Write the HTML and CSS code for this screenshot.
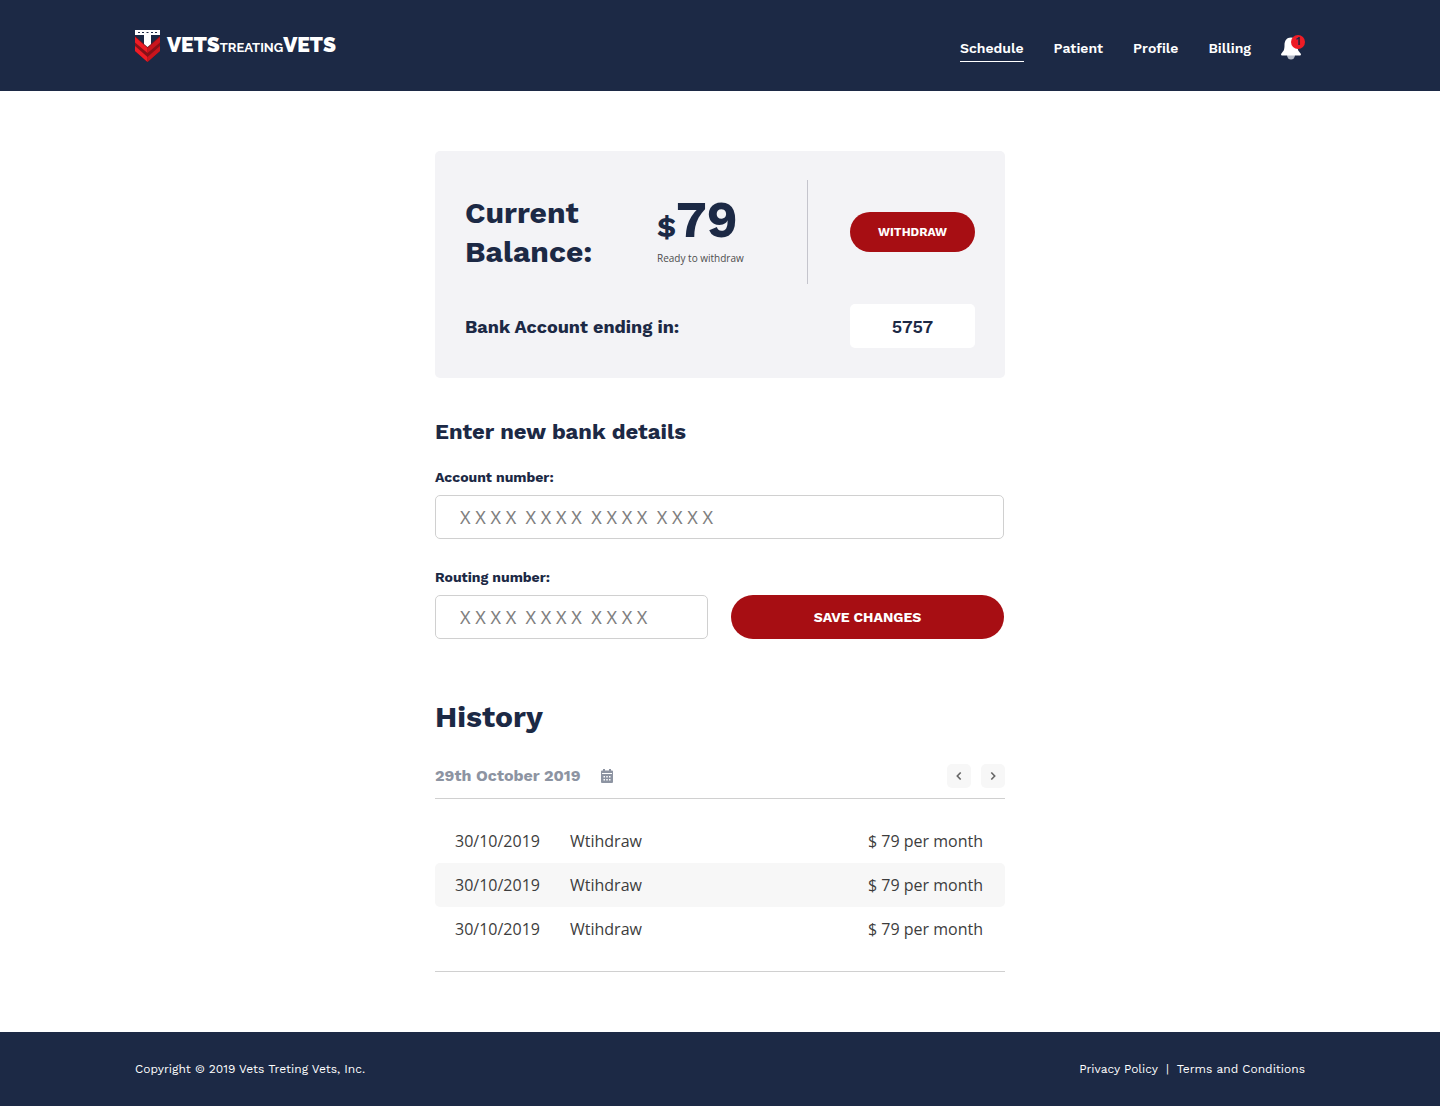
FILE: index.html
```html
<!DOCTYPE html>
<html lang="en">
<head>
<meta charset="utf-8">
<meta name="viewport" content="width=device-width, initial-scale=1">
<title>Billing - Vets Treating Vets</title>
<link rel="stylesheet" href="styles.css">
</head>
<body>
<header class="site-header">
  <div class="container header-row">
    <a class="brand" href="#" aria-label="Vets Treating Vets">
      <svg class="brand-mark" width="25" height="32" viewBox="0 0 25 32" aria-hidden="true">
        <path d="M0 6l12.500 11L25 6v15L12.500 32 0 21z" fill="#861118"/>
        <path d="M0 7l12.500 11V23L0 12.500zM0 16l12.500 11v5L0 21z" fill="#ee1c25"/>
        <path d="M25 7L12.500 18V23L25 12.500zM25 16L12.500 27v5L25 21z" fill="#c9151d"/>
        <path d="M0 0h25v5h-9v9l-3.500 3L9 14V5H0z" fill="#fff"/>
        <path d="M3 2h2v1H3zM7 2h2v1H7zM11.500 2h2v1h-2zM16 2h2v1h-2zM20 2h2v1h-2z" fill="#1c2945"/>
      </svg>
      <span class="brand-name">VETS<span class="brand-small">TREATING</span>VETS</span>
    </a>
    <nav class="nav" aria-label="Main">
      <a class="nav-link active" href="#">Schedule</a>
      <a class="nav-link" href="#">Patient</a>
      <a class="nav-link" href="#">Profile</a>
      <a class="nav-link" href="#">Billing</a>
      <button class="bell" type="button" aria-label="Notifications">
        <svg width="20" height="23" viewBox="0 0 20 23" aria-hidden="true">
          <path d="M6 18h8a4 4.500 0 0 1-8 0z" fill="#b4bac6"/>
          <path d="M10 0.500C5.500 0.500 3.500 4 3.500 8c0 5-1 6-2.700 8-1.300 1.500-.8 2.500.7 2.500h17c1.500 0 2-1 .7-2.500-1.700-2-2.700-3-2.700-8 0-4-2-7.500-6.500-7.500z" fill="#fff"/>
        </svg>
        <span class="badge">1</span>
      </button>
    </nav>
  </div>
</header>

<main class="content">
  <section class="balance">
    <div class="balance-top">
      <h1 class="title">Current Balance:</h1>
      <div class="amount-block">
        <p class="amount"><span class="currency">$</span>79</p>
        <p class="amount-note">Ready to withdraw</p>
      </div>
      <div class="withdraw">
        <button class="button button-small" type="button">WITHDRAW</button>
      </div>
    </div>
    <div class="balance-bottom">
      <label class="ending-label" for="ending">Bank Account ending in:</label>
      <input class="ending" id="ending" type="text" value="5757" readonly>
    </div>
  </section>

  <form class="details">
    <h2 class="subtitle">Enter new bank details</h2>
    <div class="field">
      <label class="label" for="account">Account number:</label>
      <input class="input" id="account" type="text" placeholder="X X X X&nbsp; X X X X&nbsp; X X X X&nbsp; X X X X">
    </div>
    <div class="field-row">
      <div class="field">
        <label class="label" for="routing">Routing number:</label>
        <input class="input" id="routing" type="text" placeholder="X X X X&nbsp; X X X X&nbsp; X X X X">
      </div>
      <button class="button" type="submit">SAVE CHANGES</button>
    </div>
  </form>

  <section class="history">
    <h2 class="title">History</h2>
    <div class="toolbar">
      <span class="date">29th October 2019</span>
      <button class="calendar" type="button" aria-label="Choose date">
        <svg width="12" height="14" viewBox="0 0 12 14" aria-hidden="true">
          <path d="M2 0h2v1.500h4V0h2v1.500h1a1 1 0 0 1 1 1V13a1 1 0 0 1-1 1H1a1 1 0 0 1-1-1V2.500a1 1 0 0 1 1-1h1z" fill="#8d94a2"/>
          <path d="M1 4h10v1H1zM2.500 7h1.500v1.500H2.500zM5.250 7h1.500v1.500h-1.500zM8 7h1.500v1.500H8zM2.500 10h1.500v1.500H2.500zM5.250 10h1.500v1.500h-1.500zM8 10h1.500v1.500H8z" fill="#fff"/>
        </svg>
      </button>
      <div class="pager">
        <button class="page-button" type="button" aria-label="Previous">
          <svg width="6" height="8" viewBox="0 0 6 8" aria-hidden="true"><path d="M4.700 .5L1.300 4l3.400 3.500" fill="none" stroke="#666" stroke-width="1.600"/></svg>
        </button>
        <button class="page-button" type="button" aria-label="Next">
          <svg width="6" height="8" viewBox="0 0 6 8" aria-hidden="true"><path d="M1.300 .5L4.700 4 1.300 7.500" fill="none" stroke="#666" stroke-width="1.600"/></svg>
        </button>
      </div>
    </div>
    <div class="table-wrap">
      <table class="table">
        <tbody>
          <tr><td class="col-date">30/10/2019</td><td>Wtihdraw</td><td class="col-sum">$ 79 per month</td></tr>
          <tr><td class="col-date">30/10/2019</td><td>Wtihdraw</td><td class="col-sum">$ 79 per month</td></tr>
          <tr><td class="col-date">30/10/2019</td><td>Wtihdraw</td><td class="col-sum">$ 79 per month</td></tr>
        </tbody>
      </table>
    </div>
  </section>
</main>

<footer class="site-footer">
  <div class="container footer-row">
    <span>Copyright © 2019 Vets Treting Vets, Inc.</span>
    <div class="legal">
      <a href="#">Privacy Policy</a>
      <span>|</span>
      <a href="#">Terms and Conditions</a>
    </div>
  </div>
</footer>
</body>
</html>
```
FILE: styles.css
```css
:root {
  --navy: #1c2945;
  --red: #a70e13;
  --line: #d0d0d0;
  --heading: "Work Sans", Inter, sans-serif;
  --text: "Open Sans", "Noto Sans", sans-serif;
}

* { box-sizing: border-box; }

body {
  margin: 0;
  min-height: 100vh;
  display: flex;
  flex-direction: column;
  background: #fff;
  color: #3d3d3d;
  font-family: var(--text);
}

h1, h2, p { margin: 0; }
a { color: inherit; text-decoration: none; }
button { border: 0; padding: 0; cursor: pointer; font-family: var(--heading); }
svg { display: block; }

.container {
  width: 100%;
  max-width: 1210px;
  margin: 0 auto;
  padding: 0 20px;
}

.site-header { background: var(--navy); color: #fff; }

.header-row {
  display: flex;
  align-items: center;
  justify-content: space-between;
  min-height: 91px;
}

.brand { display: flex; align-items: center; gap: 7px; }
.brand-name { padding-top: 2px; font: 900 21px/24px Raleway, Lato, sans-serif; }
.brand-small { font-size: 13px; font-weight: 700; }

.nav {
  display: flex;
  align-items: center;
  gap: 30px;
  padding-top: 5px;
  font: 600 14px/20px var(--heading);
}
.nav-link { padding: 4px 0 3px; border-bottom: 1px solid transparent; }
.nav-link.active { border-color: #fff; }

.bell {
  position: relative;
  width: 24px;
  background: none;
}
.badge {
  position: absolute;
  top: -2px;
  right: 0;
  width: 14px;
  height: 14px;
  border-radius: 50%;
  background: #ee1c25;
  color: var(--navy);
  font: 600 11px/14px var(--heading);
  text-align: center;
}

.content {
  width: 100%;
  max-width: 610px;
  margin: 0 auto;
  padding: 60px 20px;
  flex: 1;
}

.balance {
  padding: 29px 30px 30px;
  border-radius: 5px;
  background: #f3f3f6;
  color: var(--navy);
}
.balance-top {
  display: grid;
  grid-template-columns: 192px 1fr 168px;
  align-items: center;
  margin-bottom: 20px;
}
.title { color: var(--navy); font: 700 30px/39px var(--heading); }
.balance .title { max-width: 150px; }
.amount { font: 700 50px/48px var(--heading); }
.currency { font-size: 30px; line-height: 30px; }
.amount-note { margin-top: 4px; color: #4d4d4d; font-size: 10px; line-height: 20px; }
.withdraw {
  display: flex;
  align-items: center;
  justify-content: flex-end;
  height: 104px;
  border-left: 1px solid #c4c4cc;
}
.balance-bottom {
  display: flex;
  align-items: baseline;
  justify-content: space-between;
}
.ending-label { font: 700 18px/24px var(--heading); }
.ending {
  width: 125px;
  height: 44px;
  border: 0;
  border-radius: 5px;
  background: #fff;
  color: var(--navy);
  font: 600 18px/24px var(--heading);
  text-align: center;
}

.button {
  height: 44px;
  border-radius: 22px;
  background: var(--red);
  color: #fff;
  font-size: 14px;
  font-weight: 700;
}
.button-small { width: 125px; height: 40px; font-size: 12px; }

.details { margin: 40px 1px 0 0; color: var(--navy); }
.subtitle { margin-bottom: 21px; font: 700 22px/28px var(--heading); }
.field { display: flex; flex-direction: column; gap: 7px; }
.field-row {
  display: grid;
  grid-template-columns: 1fr 1fr;
  align-items: end;
  gap: 23px;
  margin-top: 28px;
}
.label { font: 700 14px/21px var(--heading); }
.input {
  width: 100%;
  height: 44px;
  padding: 0 24px;
  border: 1px solid var(--line);
  border-radius: 5px;
  background: #fff;
  color: #3d3d3d;
  font: 400 18px/24px "Noto Sans", sans-serif;
}
.input::placeholder { color: #808080; opacity: 1; }

.history { margin-top: 58px; }
.toolbar {
  display: flex;
  align-items: center;
  margin-top: 28px;
  padding-bottom: 10px;
  border-bottom: 1px solid var(--line);
}
.date { color: #8d94a2; font: 700 16px/24px var(--heading); }
.calendar { margin-left: 20px; background: none; }
.pager { display: flex; gap: 10px; margin-left: auto; }
.page-button {
  display: grid;
  place-items: center;
  width: 24px;
  height: 24px;
  border-radius: 5px;
  background: #f7f7f7;
}

.table-wrap { padding: 20px 0; border-bottom: 1px solid var(--line); }
.table { width: 100%; border-collapse: collapse; font-size: 16px; line-height: 24px; }
.table td { padding: 10px 0; }
.table .col-date { width: 135px; padding-left: 20px; }
.table .col-sum { padding-right: 22px; text-align: right; }
.table tr:nth-child(even) td { background: #f7f7f7; }
.table td:first-child { border-radius: 5px 0 0 5px; }
.table td:last-child { border-radius: 0 5px 5px 0; }

.site-footer {
  background: var(--navy);
  color: #fff;
  font: 400 12px/18px var(--heading);
}
.footer-row {
  display: flex;
  align-items: center;
  justify-content: space-between;
  min-height: 74px;
}
.legal { display: flex; gap: 8px; }
```
